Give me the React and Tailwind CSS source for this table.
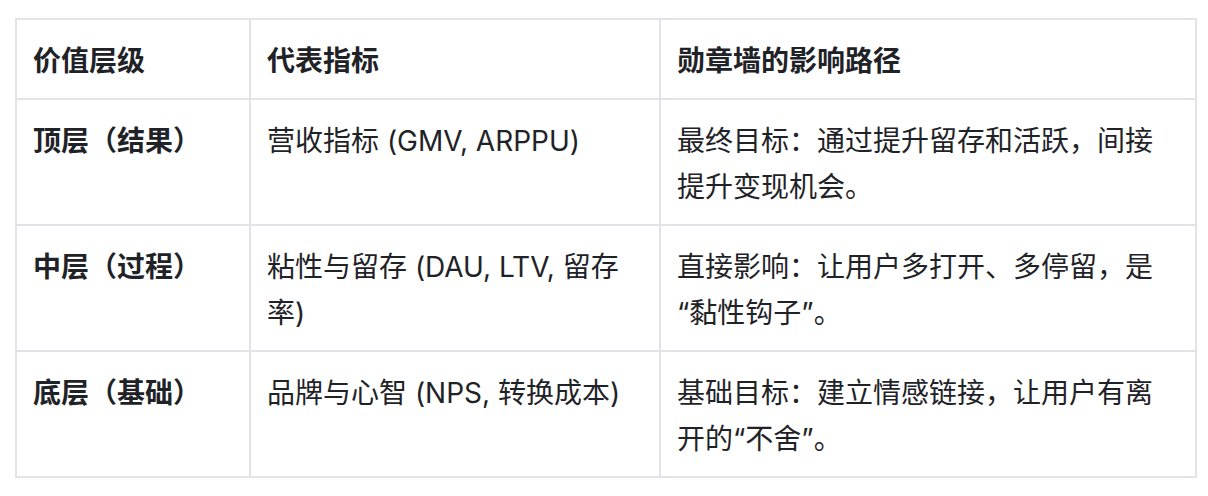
import React from "react";

const rows = [
  ["顶层（结果）", "营收指标 (GMV, ARPPU)", "最终目标：通过提升留存和活跃，间接提升变现机会。"],
  ["中层（过程）", "粘性与留存 (DAU, LTV, 留存率)", "直接影响：让用户多打开、多停留，是\u200b“黏性钩子”。"],
  ["底层（基础）", "品牌与心智 (NPS, 转换成本)", "基础目标：建立情感链接，让用户有离开的“不舍”。"],
];

export default function App() {
  const font = { fontFamily: 'Inter, "Noto Sans CJK SC", sans-serif' };
  const cell = "border-2 border-[#e2e2e8] px-4 pt-[18px] pb-[14px] leading-[46px] align-top text-left";
  return (
    <div className="w-[1208px] h-[496px] bg-white pt-[18px] pl-[15px]" style={font}>
      <table className="table-fixed border-collapse w-[1180px] text-[28px] text-[#1f2328]">
        <colgroup>
          <col className="w-[234px]" />
          <col className="w-[410px]" />
          <col className="w-[536px]" />
        </colgroup>
        <thead>
          <tr>
            <th className={cell + " font-semibold"}>价值层级</th>
            <th className={cell + " font-semibold"}>代表指标</th>
            <th className={cell + " font-semibold"}>勋章墙的影响路径</th>
          </tr>
        </thead>
        <tbody>
          {rows.map((r, i) => (
            <tr key={i}>
              <td className={cell + " font-semibold"}>{r[0]}</td>
              <td className={cell + " font-normal"}>{r[1]}</td>
              <td className={cell + " font-normal"}>{r[2]}</td>
            </tr>
          ))}
        </tbody>
      </table>
    </div>
  );
}
